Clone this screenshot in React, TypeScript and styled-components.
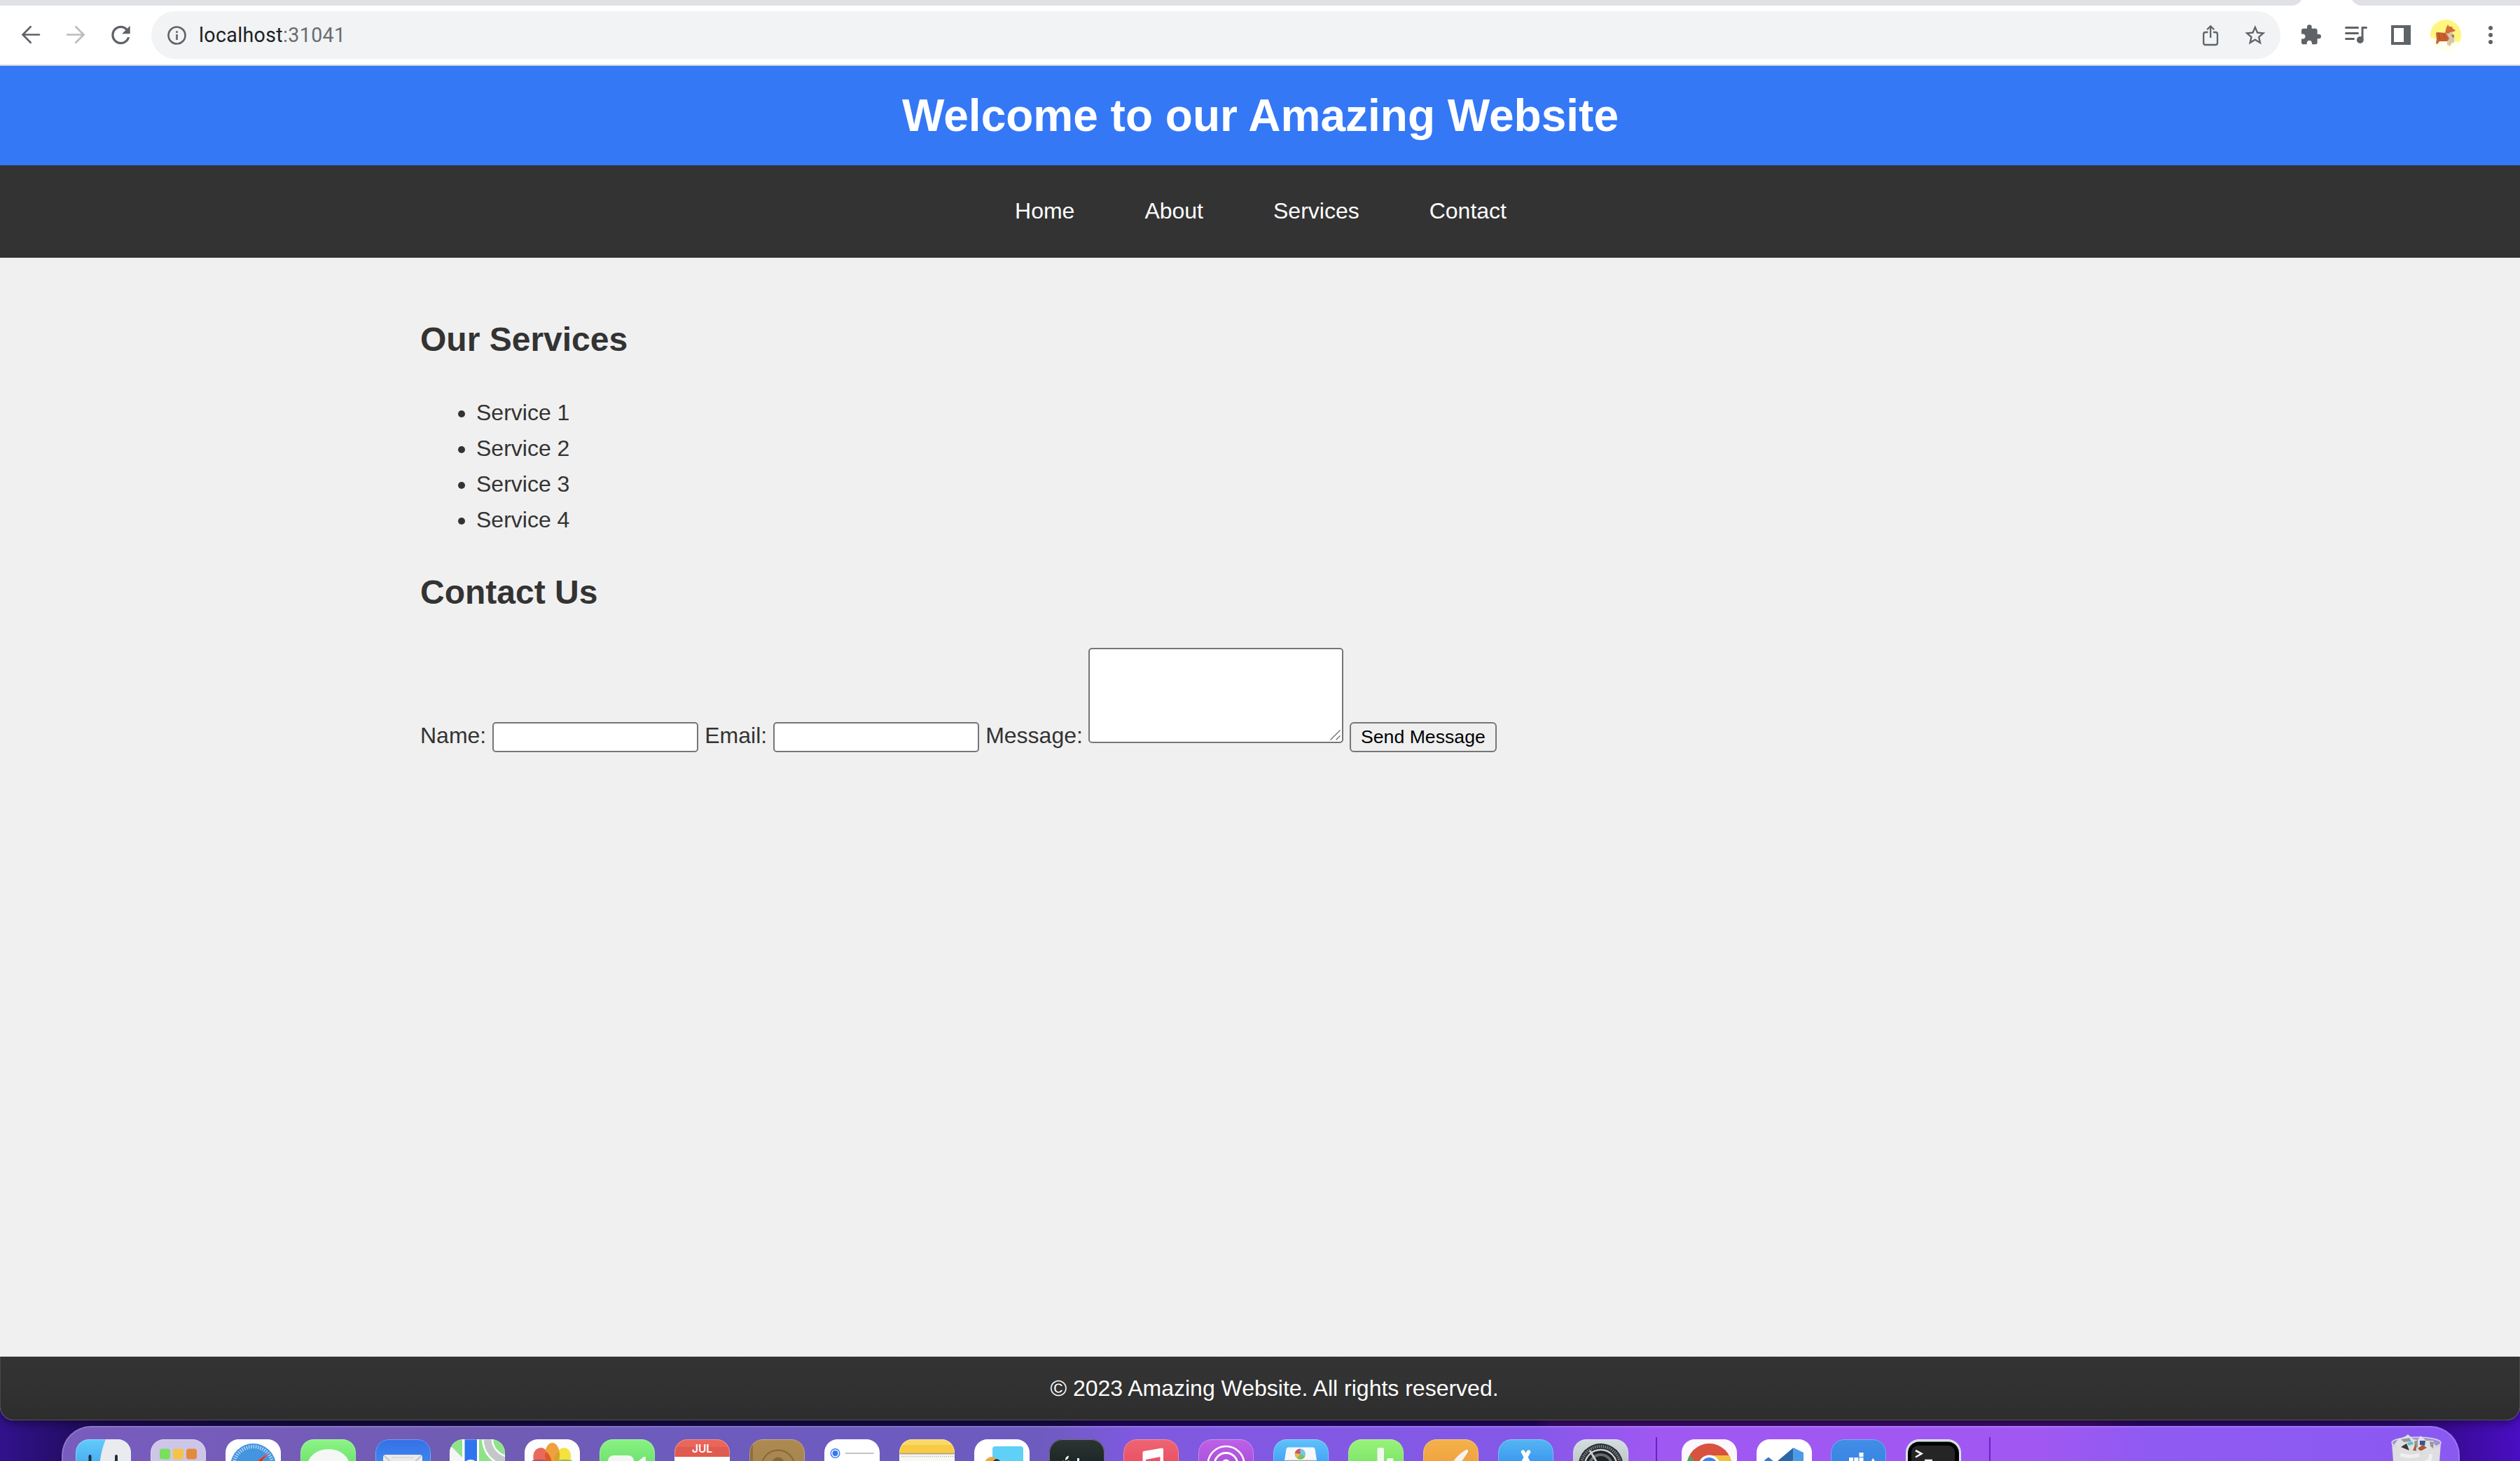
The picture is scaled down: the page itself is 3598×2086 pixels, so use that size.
import React from "react";
import styled, { createGlobalStyle } from "styled-components";

const GlobalStyle = createGlobalStyle`
  * { box-sizing: border-box; }
  body { margin: 0; background: #1b0850; overflow: hidden; }
`;

const Desktop = styled.div`
  width: 3598px;
  height: 2086px;
  overflow: hidden;
  display: flex;
  flex-direction: column;
  font-family: "Liberation Sans", Arial, sans-serif;
  background: linear-gradient(90deg, #32128c 0, #1d0a55 150px, #150a45 420px, #170949 1530px, #200560 1560px, #21055f 2190px, #390a6c 2215px, #3a0a6c 2980px, #2b0768 3050px, #2c0770 3420px, #4a0ec4 3598px);
`;

const BrowserWindow = styled.div`
  height: 2028px;
  flex: none;
  display: flex;
  flex-direction: column;
  overflow: hidden;
  border-radius: 0 0 20px 20px;
  background: #f0f0f0;
  box-shadow: 0 3px 14px rgba(0, 0, 0, 0.45);
`;

const TabStrip = styled.div`
  height: 8px;
  flex: none;
  display: flex;
  justify-content: space-between;
  overflow: hidden;
  align-items: flex-end;
  background: #fff;
`;

const TabStripPart = styled.div<{ $width: number; $side: "left" | "right" }>`
  width: ${(p) => p.$width}px;
  height: 24px;
  flex: none;
  background: #dfe1e5;
  border-radius: ${(p) => (p.$side === "left" ? "0 0 16px 0" : "0 0 0 16px")};
`;

const Toolbar = styled.div`
  height: 86px;
  flex: none;
  display: flex;
  align-items: center;
  gap: 20px;
  padding: 0 20px 0 22px;
  background: #fff;
  border-bottom: 2px solid #dadce0;
`;

const Omnibox = styled.div`
  flex: 1;
  height: 68px;
  margin: 0 2px 0 2px;
  padding: 0 14px;
  display: flex;
  align-items: center;
  gap: 20px;
  border-radius: 34px;
  background: #f1f3f4;
`;

const Url = styled.div`
  flex: 1;
  margin-left: -10px;
  font: 400 28.6px/40px Roboto, sans-serif;
  letter-spacing: 0.35px;
  color: #202124;
`;

const Port = styled.span`
  color: #6a6d71;
`;

const Glyph = styled.svg<{ $tint?: string }>`
  width: 44px;
  height: 44px;
  flex: none;
  display: block;
  color: ${(p) => p.$tint ?? "#5f6368"};
`;

const Banner = styled.header`
  height: 142px;
  flex: none;
  padding: 20px 20px 20px 21px;
  background: #3478f6;
  text-align: center;
`;

const BannerTitle = styled.h1`
  margin: 0;
  font-size: 64px;
  line-height: 102px;
  color: #fff;
`;

const Nav = styled.nav`
  height: 132px;
  flex: none;
  padding: 40px 0 0 2px;
  display: flex;
  justify-content: center;
  gap: 100px;
  background: #333;
`;

const NavLink = styled.a`
  font-size: 32px;
  line-height: 51.2px;
  color: #fff;
`;

const Content = styled.main`
  flex: 1;
  width: 2400px;
  margin: 0 auto;
  padding: 39.2px 0 0 1px;
  color: #333;
  font-size: 32px;
  line-height: 51.2px;
`;

const SectionTitle = styled.h2`
  margin: 39.8px 0;
  font-size: 48px;
  line-height: 76.8px;
`;

const ServiceList = styled.ul`
  margin: 32px 0;
  padding: 0 0 0 80px;
`;

const ContactForm = styled.form`
  height: 149px;
  display: flex;
  align-items: flex-end;
  gap: 9px;
`;

const FieldLabel = styled.label`
  font-size: 32px;
  line-height: 48px;
`;

const TextInput = styled.input`
  width: 294px;
  height: 43px;
  margin: 0;
  padding: 2px 4px;
  border: 2px solid #767676;
  border-radius: 5px;
  background: #fff;
  outline: none;
`;

const MessageField = styled.div`
  width: 364px;
  height: 136px;
  margin: 0 0 13px -1px;
  display: flex;
  align-items: flex-end;
  justify-content: flex-end;
  border: 2px solid #767676;
  border-radius: 5px;
  background: #fff;
`;

const ResizeGrip = styled.svg`
  width: 18px;
  height: 18px;
  display: block;
`;

const SubmitButton = styled.button`
  width: 210px;
  height: 43px;
  margin: 0;
  padding: 0;
  border: 2px solid #767676;
  border-radius: 6px;
  background: #efefef;
  color: #000;
  font: 26.67px/36px "Liberation Sans", Arial, sans-serif;
  white-space: nowrap;
`;

const Footer = styled.footer`
  height: 91px;
  flex: none;
  padding: 20px 0 20px 41px;
  text-align: center;
  font-size: 32px;
  line-height: 51.2px;
  color: #fff;
  background: linear-gradient(#333, #323232 45%, #2d2d2d);
  border-radius: 0 0 20px 20px;
  box-shadow: inset 0 -1px 0 #555, inset 1px 0 0 #484848, inset -1px 0 0 #484848;
`;

const DockBar = styled.div`
  flex: none;
  width: 3424px;
  height: 116px;
  margin: 8px 0 0 88px;
  padding: 17px 24px 0 18px;
  display: flex;
  align-items: flex-start;
  border: 2px solid rgba(255, 255, 255, 0.16);
  border-radius: 42px;
  background: linear-gradient(90deg, #785cbe 0, #705cb3 620px, #6d5bbe 860px, #6e5bc0 1400px, #7f59df 1530px, #8558e8 2100px, #a058f2 2280px, #a158f2 2820px, #8f5af2 2980px, #8a59f2 3424px) border-box;
`;

const DockGroup = styled.div<{ $gap: number }>`
  display: flex;
  gap: ${(p) => p.$gap}px;
`;

const DockDivider = styled.div<{ $before: number; $after: number }>`
  width: 2px;
  height: 90px;
  margin: -3px ${(p) => p.$after}px 0 ${(p) => p.$before}px;
  background: #6a22c4;
`;

const DockIcon = styled.svg`
  width: 79px;
  height: 79px;
  flex: none;
  display: block;
  overflow: visible;
`;

const Trash = styled.svg`
  width: 72px;
  height: 80px;
  margin: -7px 0 0 auto;
  display: block;
  overflow: visible;
`;

function Tile({ id, top, bottom, children }: { id: string; top: string; bottom?: string; children?: React.ReactNode }) {
  return (
    <DockIcon viewBox="0 0 79 79">
      <defs>
        <linearGradient id={id} x1="0" y1="0" x2="0" y2="1">
          <stop offset="0" stopColor={top} />
          <stop offset="1" stopColor={bottom ?? top} />
        </linearGradient>
        <clipPath id={id + "-clip"}>
          <rect width="79" height="79" rx="19" />
        </clipPath>
      </defs>
      <g clipPath={`url(#${id}-clip)`}>
        <rect width="79" height="79" fill={`url(#${id})`} />
        {children}
        <rect x="0.5" y="0.5" width="78" height="78" rx="18.5" fill="none" stroke="#fff" strokeOpacity="0.3" />
      </g>
    </DockIcon>
  );
}

const mainApps = (
  <>
    <Tile id="finder" top="#63cbfa" bottom="#2586ea">
      <path d="M43 0C38 12 35 24 34 40V79H79V0Z" fill="#e9ebee" />
      <rect x="18.5" y="22" width="4" height="14" rx="2" fill="#20303c" />
      <rect x="56" y="22" width="4" height="14" rx="2" fill="#20303c" />
    </Tile>
    <Tile id="launchpad" top="#cec6e6">
      <rect x="13" y="13.5" width="15" height="15" rx="3.5" fill="#79df5c" />
      <rect x="32" y="13.5" width="15" height="15" rx="3.5" fill="#f4c443" />
      <rect x="51" y="13.5" width="15" height="15" rx="3.5" fill="#e38a3c" />
    </Tile>
    <Tile id="safari" top="#fff">
      <circle cx="39.5" cy="38.5" r="32.5" fill="#4495e0" />
      <circle cx="39.5" cy="38.5" r="28" fill="none" stroke="#dcebf8" strokeWidth="5" strokeDasharray="1.1 2.2" />
      <path d="M63 19 36 36 43 42Z" fill="#e8503e" />
      <path d="M57 23 39 39 43 42Z" fill="#a8352c" />
    </Tile>
    <Tile id="messages" top="#8cf486" bottom="#4dcc50">
      <ellipse cx="40" cy="38" rx="30" ry="24" fill="#f4f7f4" />
    </Tile>
    <Tile id="mail" top="#3570e8" bottom="#4aa6f4">
      <rect x="11" y="22" width="56" height="38" rx="4" fill="#e9eaec" />
      <path d="M13 24 39 48 65 24" fill="none" stroke="#bfc2c7" strokeWidth="1.8" />
      <path d="M23 26H54" stroke="#d6d7da" strokeWidth="2" strokeDasharray="3 1" />
    </Tile>
    <Tile id="maps" top="#8ee288">
      <path d="M0 10 18 19V79H0Z" fill="#f4f5f5" />
      <path d="M4 12 18 19V26Z" fill="#8ee288" />
      <path d="M18 0h24v79H18Z" fill="#fff" />
      <path d="M21.500 0h17.500v79H21.500Z" fill="#2f73ee" />
      <path d="M54 0C55 16 64 26 79 31" fill="none" stroke="#fff" strokeWidth="16" />
      <path d="M54 0C55 16 64 26 79 31" fill="none" stroke="#c4c6ca" strokeWidth="11" />
      <circle cx="30" cy="40" r="11" fill="#fff" />
    </Tile>
    <Tile id="photos" top="#fdfdfd">
      <ellipse cx="55" cy="26" rx="11" ry="14" transform="rotate(14 55 26)" fill="#f5e13f" />
      <ellipse cx="24" cy="26" rx="11.5" ry="14" transform="rotate(-14 24 26)" fill="#e86a5c" />
      <ellipse cx="39.5" cy="22" rx="10.5" ry="17" fill="#efa13d" />
      <path d="M30 17C37 23 39 28 39 40 31 34 27 28 30 17Z" fill="#e0562c" />
      <path d="M49 17C52 28 48 34 40 40 41 28 43 22 49 17Z" fill="#d6a42b" />
      <path d="M44 31Q54 27 68 30L66 45H42Z" fill="#94bd4a" />
      <path d="M34 31Q24 27 11 30L13 45H37Z" fill="#b64d68" />
    </Tile>
    <Tile id="facetime" top="#88f284" bottom="#4ecb50">
      <rect x="12" y="23" width="37" height="34" rx="8" fill="#f3f6f3" />
      <path d="M53 33 63 25Q66 24 66 27V54L53 46Z" fill="#f3f6f3" />
    </Tile>
    <Tile id="calendar" top="#fff">
      <rect width="79" height="25" fill="#df5b4f" />
      <rect width="79" height="11" fill="#e9665a" />
      <text x="39.5" y="19" textAnchor="middle" fontFamily="Inter, sans-serif" fontSize="15.5" fontWeight="600" fill="#fff">JUL</text>
    </Tile>
    <Tile id="contacts" top="#ac8a52" bottom="#a17f48">
      <rect width="5" height="79" fill="#8e6f3d" />
      <circle cx="41" cy="39" r="23.5" fill="none" stroke="#85683a" strokeWidth="2" />
      <circle cx="41" cy="34" r="8.5" fill="#85683a" />
    </Tile>
    <Tile id="reminders" top="#fff">
      <circle cx="15.5" cy="20" r="6.3" fill="#fff" stroke="#3478f6" strokeWidth="1.4" />
      <circle cx="15.5" cy="20" r="4" fill="#3478f6" />
      <path d="M30 20H70.500" stroke="#c2c3c7" strokeWidth="1.8" />
    </Tile>
    <Tile id="notes" top="#f8f7f2">
      <rect width="79" height="20" fill="#f8cb45" />
      <rect width="79" height="8" fill="#fad868" />
      <rect y="19.500" width="79" height="2" fill="#b6a681" />
      <path d="M3 24.500H79" stroke="#b9b7b0" strokeWidth="1.5" strokeDasharray="1.3 1.6" />
    </Tile>
    <Tile id="freeform" top="#fff">
      <rect x="26" y="10" width="44" height="44" rx="4" fill="#5fd1f6" />
      <circle cx="25" cy="35" r="10" fill="#efa640" />
      <path d="M26 33Q30 25 36 30L40 40H26Z" fill="#183b5c" />
    </Tile>
    <Tile id="tv" top="#2b3534" bottom="#0b1212">
      <path d="M23 30C23 26 25 24 28 23.500 28 27 26 29 23 30ZM17 35Q18 29 22 31 25 32 28 30L30 33V45H18Z" fill="#f4f6f5" />
      <path d="M40 27H43V50H40Z" fill="#f4f6f5" />
    </Tile>
    <Tile id="music" top="#ee6574" bottom="#e6384c">
      <path d="M27.500 19Q27.500 17.500 29 17L55 12.500Q57 12.500 57 14V52H52.500V25L32 29V58H27.500Z" fill="#fff" />
    </Tile>
    <Tile id="podcasts" top="#bd62e6" bottom="#9938d0">
      <circle cx="39.5" cy="36" r="26" fill="none" stroke="#fff" strokeWidth="2.6" />
      <circle cx="39.5" cy="36" r="16.500" fill="none" stroke="#fff" strokeWidth="2.8" />
      <circle cx="39.5" cy="34" r="5.5" fill="#fff" />
    </Tile>
    <Tile id="keynote" top="#5fc2fa" bottom="#2276ee">
      <path d="M21 11.500H57Q59 11.500 59.500 14L62 30H16L18.500 14Q19 11.500 21 11.500Z" fill="#f6f7f9" />
      <circle cx="38.500" cy="21" r="7.5" fill="#76c6ea" />
      <path d="M38.500 21V13.500A7.500 7.500 0 0 0 32 25Z" fill="#c9586a" />
      <path d="M38.500 21 32 25A7.500 7.500 0 0 0 45.500 24Z" fill="#7cc05f" />
      <path d="M38.500 21 31 20A7.500 7.500 0 0 0 34 27Z" fill="#f0b94a" />
      <path d="M21 30.500H58" stroke="#9fa4ab" strokeWidth="1.5" />
    </Tile>
    <Tile id="numbers" top="#99f27a" bottom="#5ad650">
      <rect x="41.500" y="12" width="9.500" height="50" rx="2" fill="#f3f7f2" />
      <rect x="55" y="27" width="9.500" height="40" rx="2" fill="#f3f7f2" />
      <rect x="28" y="31.500" width="9.500" height="40" rx="2" fill="#f3f7f2" />
    </Tile>
    <Tile id="pages" top="#f3b24b" bottom="#ee8d2e">
      <path d="M66 18 50 38 38 48 40 40Q47 24 61 15Q65 14 66 18Z" fill="#d68c31" />
      <path d="M64.500 18 52 36 38 50 42 33Q49 22 61 15Q65 13.500 64.500 18Z" fill="#f5f3ef" />
    </Tile>
    <Tile id="appstore" top="#54b6f2" bottom="#1d6fee">
      <path d="M35.500 18 46 38M43.500 18 33 38" stroke="#fff" strokeWidth="5.500" strokeLinecap="round" />
    </Tile>
    <Tile id="settings" top="#d4dee1" bottom="#9ea7ab">
      <circle cx="39.500" cy="38" r="32" fill="#2a2e30" />
      <circle cx="39.500" cy="38" r="28" fill="none" stroke="#7f878a" strokeWidth="4" strokeDasharray="1.500 1.500" />
      <circle cx="39.500" cy="38" r="23" fill="#1e2223" stroke="#c7cfd2" strokeWidth="2.4" />
      <circle cx="39.500" cy="38" r="16" fill="none" stroke="#656d70" strokeWidth="4" />
      <path d="M24 16 38 40" stroke="#c7cfd2" strokeWidth="3" />
    </Tile>
  </>
);

const extraApps = (
  <>
    <Tile id="chrome" top="#faf7ff">
      <circle cx="39.500" cy="38" r="32" fill="#d9513f" />
      <path d="M39.500 23H68A32 32 0 0 1 40 70Z" fill="#f3c03f" />
      <path d="M12 22 30 50 40 70A32 32 0 0 1 12 22Z" fill="#4ba35a" />
      <circle cx="39.500" cy="38" r="15.500" fill="#fff" />
      <circle cx="39.500" cy="38" r="12" fill="#4680ec" />
    </Tile>
    <Tile id="vscode" top="#fff">
      <path d="M52.500 12 67 19V62L52.500 68Z" fill="#4b9be9" />
      <path d="M52.500 12V30L24 56 11 47Z" fill="#2a66a9" />
      <path d="M11 30 17 25.500 35 40 28 48Z" fill="#377cc8" />
    </Tile>
    <Tile id="docker" top="#418de6" bottom="#2e7de0">
      <path d="M40.500 19H46.500V25H40.500ZM26 26H32V32H26ZM33.300 26H39.300V32H33.300ZM40.500 26H46.500V32H40.500Z" fill="#fff" />
      <path d="M58 38Q57 31 60 27 64 31 64 38Z" fill="#fff" />
    </Tile>
    <Tile id="terminal" top="#d3dee1">
      <rect x="3" y="3.500" width="73" height="73" rx="16" fill="#020202" />
      <rect x="8" y="9" width="62" height="62" rx="9" fill="#252525" />
      <path d="M14 16 22.500 20.500 14 25.500" fill="none" stroke="#f4f4f4" strokeWidth="2.6" />
      <path d="M27 30H38" stroke="#f4f4f4" strokeWidth="2.6" />
    </Tile>
  </>
);

const services = ["Service 1", "Service 2", "Service 3", "Service 4"];

export default function App() {
  return (
    <Desktop>
      <GlobalStyle />
      <BrowserWindow>
        <TabStrip>
          <TabStripPart $width={3288} $side="left" />
          <TabStripPart $width={242} $side="right" />
        </TabStrip>
        <Toolbar>
          <Glyph viewBox="0 0 44 44">
            <path d="M34 21.500H10.500M21.700 10.300 10.500 21.500 21.700 32.700" fill="none" stroke="currentColor" strokeWidth="2.700" strokeLinecap="round" />
          </Glyph>
          <Glyph viewBox="0 0 44 44" $tint="#babcbe">
            <path d="M10 21.500H33.500M22.300 10.300 33.500 21.500 22.300 32.700" fill="none" stroke="currentColor" strokeWidth="2.700" strokeLinecap="round" />
          </Glyph>
          <Glyph viewBox="0 0 44 44">
            <path transform="translate(2.700 2.200) scale(1.650)" d="M17.650 6.350A7.958 7.958 0 0 0 12 4c-4.420 0-7.990 3.580-7.990 8s3.570 8 7.990 8c3.730 0 6.840-2.550 7.730-6h-2.080A5.990 5.990 0 0 1 12 18c-3.310 0-6-2.690-6-6s2.690-6 6-6c1.660 0 3.140.690 4.220 1.780L13 11h7V4l-2.350 2.350z" fill="currentColor" />
          </Glyph>
          <Omnibox>
            <Glyph viewBox="0 0 44 44">
              <circle cx="22.500" cy="22.500" r="12" fill="none" stroke="currentColor" strokeWidth="2.600" />
              <path d="M21.200 16.300h2.600v2.600h-2.600zM21.200 21h2.600v8h-2.600z" fill="currentColor" />
            </Glyph>
            <Url>localhost<Port>:31041</Port></Url>
            <Glyph viewBox="0 0 44 44">
              <path d="M18.500 18H15Q12.200 18 12.200 20.800V33.200Q12.200 36 15 36H29.200Q32 36 32 33.200V20.800Q32 18 29.200 18H26M22.200 26V9.500M17.200 14.300 22.200 9.300 27.200 14.300" fill="none" stroke="currentColor" strokeWidth="2.300" />
            </Glyph>
            <Glyph viewBox="0 0 44 44">
              <path transform="translate(4.400 5) scale(1.450)" d="M22 9.240l-7.190-.620L12 2 9.190 8.630 2 9.240l5.460 4.730L5.820 21 12 17.270 18.180 21l-1.630-7.030L22 9.240zM12 15.400l-3.760 2.270 1-4.280-3.320-2.880 4.380-.380L12 6.100l1.710 4.040 4.380.380-3.320 2.880 1 4.280L12 15.400z" fill="currentColor" />
            </Glyph>
          </Omnibox>
          <Glyph viewBox="0 0 44 44">
            <path transform="translate(5.300 6) scale(1.333)" d="M20.500 11H19V7c0-1.100-.9-2-2-2h-4V3.500a2.500 2.500 0 0 0-5 0V5H4c-1.100 0-1.990.9-1.990 2v3.800H3.500c1.490 0 2.700 1.210 2.700 2.700s-1.210 2.700-2.700 2.700H2V20c0 1.100.9 2 2 2h3.800v-1.500c0-1.490 1.210-2.700 2.700-2.700 1.490 0 2.700 1.210 2.700 2.700V22H17c1.100 0 2-.9 2-2v-4h1.500a2.500 2.500 0 0 0 0-5z" fill="currentColor" />
          </Glyph>
          <Glyph viewBox="0 0 44 44">
            <path d="M7.500 11.500H24.500M7.500 19.500H24.500M7.500 27.500H18.500M31 28V11.500H36.500" fill="none" stroke="currentColor" strokeWidth="3" strokeLinecap="round" />
            <circle cx="27.800" cy="29" r="4.900" fill="currentColor" />
          </Glyph>
          <Glyph viewBox="0 0 44 44">
            <path d="M8 8H36V36H8ZM12 12V32H26V12Z" fill="currentColor" fillRule="evenodd" />
          </Glyph>
          <Glyph viewBox="0 0 44 44">
            <clipPath id="avatar-clip"><circle cx="22" cy="22" r="22" /></clipPath>
            <g clipPath="url(#avatar-clip)">
              <rect width="44" height="44" fill="#fff67f" />
              <path d="M0 25 10 28 42 32 44 44H0Z" fill="#fffff0" />
              <path d="M22 20 31 18 34 23 34 33 31 33 28 38 24 36 24 31Z" fill="#d9c6a8" />
              <path d="M30 21 34 22 34 26 31 25Z" fill="#9c8062" />
              <path d="M8 19 10 18 22 19 27 27 24 31 13 31 10 35 8 34 9 28Z" fill="#c4602f" />
              <path d="M21 19 23 11 25 7 27 10 31 10 32 13 36 15 34 17 29 18 25 20Z" fill="#d36d3a" />
              <path d="M12 19 14 29M19 20 21 28" stroke="#a94d22" strokeWidth="0.8" />
            </g>
          </Glyph>
          <Glyph viewBox="0 0 44 44">
            <circle cx="22" cy="12" r="3" fill="currentColor" />
            <circle cx="22" cy="22" r="3" fill="currentColor" />
            <circle cx="22" cy="32" r="3" fill="currentColor" />
          </Glyph>
        </Toolbar>
        <Banner>
          <BannerTitle>Welcome to our Amazing Website</BannerTitle>
        </Banner>
        <Nav>
          <NavLink>Home</NavLink>
          <NavLink>About</NavLink>
          <NavLink>Services</NavLink>
          <NavLink>Contact</NavLink>
        </Nav>
        <Content>
          <SectionTitle>Our Services</SectionTitle>
          <ServiceList>
            {services.map((name) => (
              <li key={name}>{name}</li>
            ))}
          </ServiceList>
          <SectionTitle>Contact Us</SectionTitle>
          <ContactForm>
            <FieldLabel>Name:</FieldLabel>
            <TextInput />
            <FieldLabel>Email:</FieldLabel>
            <TextInput />
            <FieldLabel>Message:</FieldLabel>
            <MessageField>
              <ResizeGrip viewBox="0 0 18 18">
                <path d="M1.500 15.500 15.500 1.500M9.500 15.500 15.500 9.500" stroke="#6b6b6b" strokeWidth="1.300" />
              </ResizeGrip>
            </MessageField>
            <SubmitButton type="button">Send Message</SubmitButton>
          </ContactForm>
        </Content>
        <Footer>© 2023 Amazing Website. All rights reserved.</Footer>
      </BrowserWindow>
      <DockBar>
        <DockGroup $gap={27.9}>{mainApps}</DockGroup>
        <DockDivider $before={39} $after={35} />
        <DockGroup $gap={27.7}>{extraApps}</DockGroup>
        <DockDivider $before={40} $after={0} />
        <Trash viewBox="0 0 72 80">
          <path d="M1 13 6 80H66L71 13Z" fill="#d2cfe0" />
          <ellipse cx="36" cy="12" rx="35" ry="8" fill="#a193cf" stroke="#dcd8ea" strokeWidth="1.500" />
          <path d="M5 14 10 7 20 3 24 0 32 7 38 8 42 2 50 9 60 9 64 18 51 23 20 23 8 19Z" fill="#dfe0e1" />
          <path d="M14 7 26 5 29 10 18 11ZM33 10 38 8 38 18 34 20ZM55 10 61 11 60 20 56 17Z" fill="#95999c" />
          <path d="M23 12 30 10 32 14 25 16Z" fill="#55c1d8" />
          <path d="M14 18 22 13 26 23Z" fill="#3f3734" />
          <path d="M41 9 49 9 48 16 41 15Z" fill="#38558e" />
          <path d="M38 20 45 15 51 19 42 24ZM31 23 35 13 36 24Z" fill="#a55a36" />
          <path d="M2 17Q36 30 70 17L66 80H6Z" fill="#dedee0" />
          <path d="M13 29Q30 34 40 29M48 40Q58 38 56 28" fill="none" stroke="#efeff0" strokeWidth="5" />
        </Trash>
      </DockBar>
    </Desktop>
  );
}
